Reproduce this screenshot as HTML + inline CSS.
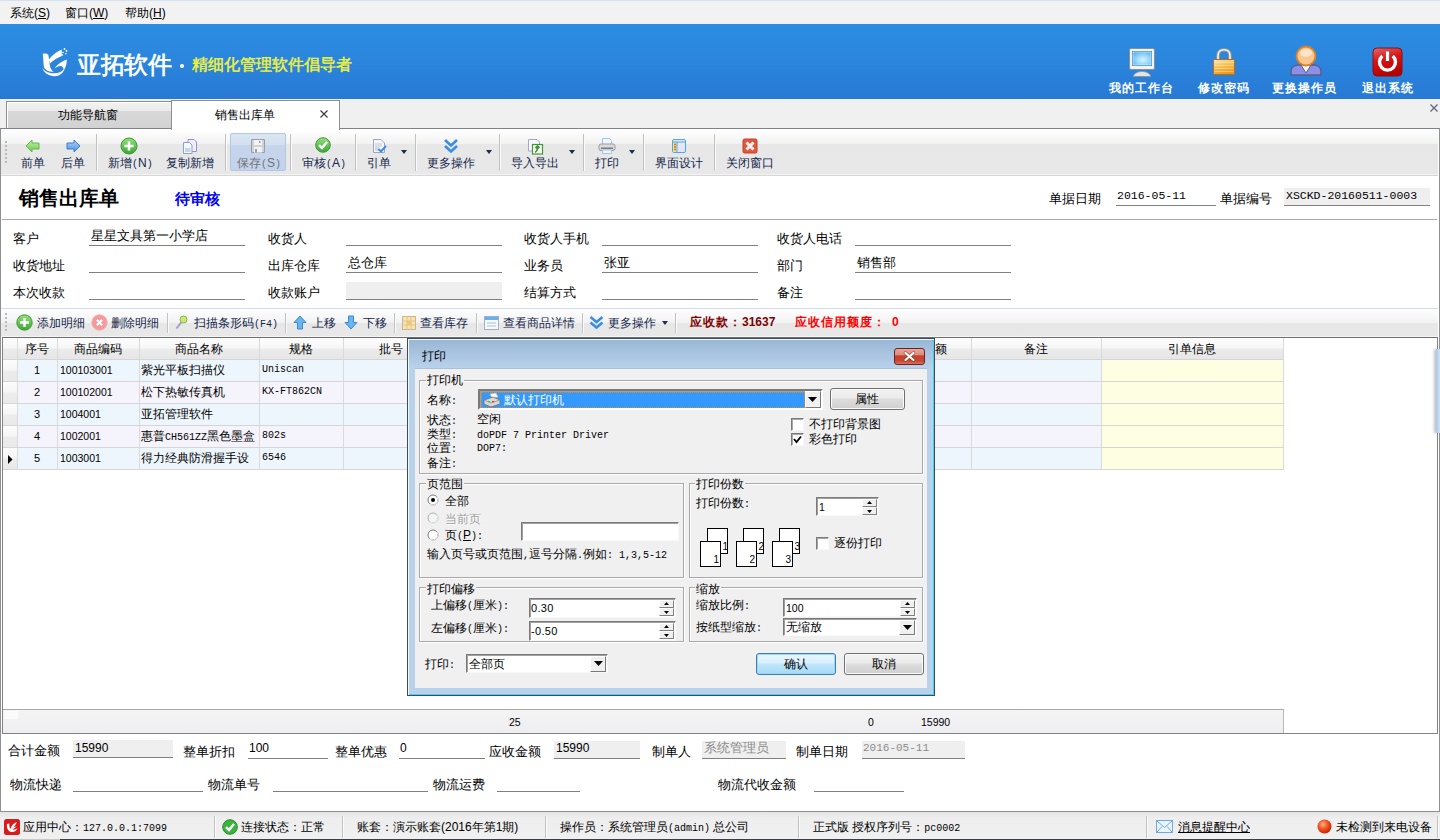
<!DOCTYPE html>
<html><head><meta charset="utf-8">
<style>
*{box-sizing:border-box}
body{margin:0;width:1440px;height:840px;position:relative;overflow:hidden;background:#f0f0f0;font-family:"Liberation Sans",sans-serif;font-size:12px;color:#000}
.a{position:absolute}
.t{position:absolute;white-space:nowrap;line-height:12px;font-size:12px}
.f13{font-size:13px;line-height:13px}
.hw{font-family:"Liberation Mono",monospace;font-size:10px;display:inline-block;width:6px;text-align:center}
.m{font-family:"Liberation Mono",monospace}
.nv{color:#13254a}
.sep{position:absolute;width:2px;background:#c2c2c2;border-right:1px solid #fafafa}
.ul{position:absolute;height:1px;background:#808080}
.gb{position:absolute;border:1px solid #a9a9a9;box-shadow:1px 1px 0 #fff inset,1px 1px 0 #fff}
.gl{position:absolute;background:#f0f0f0;line-height:12px;white-space:nowrap;padding:0 1px}
.sunk{position:absolute;background:#fff;border:1px solid;border-color:#828282 #fff #fff #828282;box-shadow:inset 1px 1px 0 #404040,0 0 0 0 #fff}
</style></head><body>

<svg width="0" height="0" style="position:absolute"><defs><linearGradient id="gg" x1="0" y1="0" x2="0" y2="1"><stop offset="0" stop-color="#c6f0a6"/><stop offset="1" stop-color="#6cc84e"/></linearGradient><linearGradient id="bg" x1="0" y1="0" x2="0" y2="1"><stop offset="0" stop-color="#b0d6fa"/><stop offset="1" stop-color="#4a8ee0"/></linearGradient><linearGradient id="pg" x1="0" y1="0" x2="0" y2="1"><stop offset="0" stop-color="#96e07c"/><stop offset="1" stop-color="#3aa636"/></linearGradient></defs></svg>
<!-- MENU BAR -->
<div class="a" style="left:0;top:0;width:1440px;height:24px;background:#f2f2f2;border-top:1px solid #d3e1f3"></div>
<div class="t" style="left:10px;top:7px">系统(<u>S</u>)</div>
<div class="t" style="left:65px;top:7px">窗口(<u>W</u>)</div>
<div class="t" style="left:125px;top:7px">帮助(<u>H</u>)</div>

<!-- HEADER -->
<div class="a" style="left:0;top:24px;width:1440px;height:75px;background:linear-gradient(180deg,#2b8ee2 0%,#2b85dd 50%,#2779d4 100%)"></div>
<svg class="a" style="left:38px;top:44px" width="34" height="36" viewBox="0 0 34 36">
 <path d="M4.7 10 C6.5 9.3 9 9.5 10.3 10.8 C11 14 11.3 18 11.8 21 C12.3 24 13.5 26.5 15.5 27.8 C11 28 7.5 26.5 6 23.5 C5.2 19 5.5 14 4.7 10 Z" fill="#fff"/>
 <path d="M10.8 15.5 C14.5 11 19 7.5 23.8 5.6 L23.8 12 C19.5 13.5 15 16.5 12 19.5 Z" fill="#fff"/>
 <path d="M16.3 24.5 C19.5 20 24 17 28.8 15.5 C28.8 19.5 28 23 25.8 26 C25.3 23 24 21.8 22 22 C20 22.3 18 23.3 16.3 24.5 Z" fill="#fff"/>
 <path d="M4.3 24 C7 27.8 11 29.3 16 29.3 C21 29.3 24.5 27.5 26.8 24 C25.5 29.5 21.5 32.2 16.5 32.2 C10.5 32.2 6 28.8 4.3 24 Z" fill="#fff"/>
 <circle cx="26.5" cy="5" r=".9" fill="#fff"/><circle cx="28.5" cy="7" r=".9" fill="#fff"/><circle cx="25" cy="8.5" r=".8" fill="#fff"/><circle cx="27.8" cy="9.8" r=".8" fill="#fff"/><circle cx="24.5" cy="11" r=".7" fill="#fff"/>
</svg>
<div class="a" style="left:77px;top:51px;font-size:24px;line-height:28px;color:#fff;white-space:nowrap;letter-spacing:-0.5px;-webkit-text-stroke:0.7px #fff">亚拓软件</div>
<div class="a" style="left:180px;top:64px;width:4px;height:4px;border-radius:2px;background:#fff"></div>
<div class="a" style="left:192px;top:55px;font-size:16px;line-height:20px;color:#f0f23a;white-space:nowrap;-webkit-text-stroke:0.45px #f0f23a">精细化管理软件倡导者</div>

<!-- monitor -->
<svg class="a" style="left:1128px;top:47px" width="28" height="30" viewBox="0 0 28 30">
 <defs><radialGradient id="scr" cx=".55" cy=".6" r=".7"><stop offset="0" stop-color="#d8f4fe"/><stop offset=".6" stop-color="#8cd2f8"/><stop offset="1" stop-color="#5ab0ea"/></radialGradient></defs>
 <path d="M5 29.5 C6 26.5 9.5 24.5 14 24.5 C18.5 24.5 22 26.5 23 29.5 Z" fill="#e2e4e6" stroke="#8a9096" stroke-width=".8"/>
 <rect x="1.5" y="1.5" width="25" height="21" rx="1.5" fill="#f0f2f3" stroke="#8a9096"/>
 <rect x="4" y="4" width="20" height="15" fill="#3a86c8"/>
 <rect x="5" y="5" width="18" height="13" fill="url(#scr)" stroke="#e8f8ff" stroke-width=".6"/>
</svg>
<!-- lock -->
<svg class="a" style="left:1212px;top:48px" width="24" height="30" viewBox="0 0 24 30">
 <defs><linearGradient id="lk" x1="0" y1="0" x2=".4" y2="1"><stop offset="0" stop-color="#fde6b0"/><stop offset=".5" stop-color="#f8c050"/><stop offset="1" stop-color="#f09a18"/></linearGradient></defs>
 <path d="M6 12 V8 C6 3.8 8.5 1.8 12 1.8 C15.5 1.8 18 3.8 18 8 V12" fill="none" stroke="#8e9398" stroke-width="3.6"/>
 <path d="M6 12 V8 C6 3.8 8.5 1.8 12 1.8 C15.5 1.8 18 3.8 18 8 V12" fill="none" stroke="#f2f3f4" stroke-width="1.6"/>
 <rect x="1.5" y="11.5" width="21" height="15" rx="1" fill="url(#lk)" stroke="#c0681c"/>
 <path d="M2.5 14.5h19M2.5 17.5h19M2.5 20.5h19M2.5 23.5h19" stroke="#fff" stroke-width=".7" opacity=".5"/>
</svg>
<!-- user -->
<svg class="a" style="left:1289px;top:45px" width="34" height="32" viewBox="0 0 34 32">
 <path d="M2 30 V26 C2 22 6 20 10 20 H24 C28 20 32 22 32 26 V30 Z" fill="#8d8ee6" stroke="#5a5c8c" stroke-width="1.5"/>
 <path d="M12 20 L17 28 L22 20 Z" fill="#fff" stroke="#5a5c8c" stroke-width="1"/>
 <circle cx="17" cy="11" r="9.5" fill="#fbc58e" stroke="#d9822b" stroke-width="1.8"/>
 <ellipse cx="17" cy="8" rx="6" ry="4" fill="#fde3c8"/>
</svg>
<!-- power -->
<svg class="a" style="left:1372px;top:47px" width="31" height="30" viewBox="0 0 31 30">
 <defs><linearGradient id="pw" x1="0" y1="0" x2="0.3" y2="1"><stop offset="0" stop-color="#e06a6a"/><stop offset=".45" stop-color="#d81818"/><stop offset="1" stop-color="#b80000"/></linearGradient></defs>
 <rect x="1" y="1" width="29" height="28" rx="4" fill="url(#pw)" stroke="#8a1010"/>
 <path d="M10.3 9 A8 8 0 1 0 20.7 9" fill="none" stroke="#fff" stroke-width="3.4"/>
 <path d="M15.5 4.5 V14" stroke="#fff" stroke-width="3.2"/>
</svg>
<div class="t" style="left:1109px;top:82px;color:#fff;font-weight:bold;letter-spacing:1px">我的工作台</div>
<div class="t" style="left:1198px;top:82px;color:#fff;font-weight:bold;letter-spacing:1px">修改密码</div>
<div class="t" style="left:1272px;top:82px;color:#fff;font-weight:bold;letter-spacing:1px">更换操作员</div>
<div class="t" style="left:1362px;top:82px;color:#fff;font-weight:bold;letter-spacing:1px">退出系统</div>

<!-- TAB STRIP -->
<div class="a" style="left:0;top:99px;width:1440px;height:30px;background:#f0f0f0"></div>

<div class="a" style="left:6px;top:101px;width:166px;height:28px;border:1px solid #8a8e95;border-bottom:none;background:linear-gradient(180deg,#f2f2f2 0px,#ebebeb 9px,#d8d8d8 9px,#d2d2d2 100%);box-shadow:inset 1px 1px 0 #fff"></div>
<div class="t" style="left:58px;top:109px">功能导航窗</div>
<div class="a" style="left:171px;top:100px;width:169px;height:30px;border:1px solid #8a8e95;border-bottom:none;background:#fff;z-index:2"></div>
<div class="t" style="left:215px;top:109px;z-index:3">销售出库单</div>
<svg class="a" style="left:319px;top:109px;z-index:3" width="10" height="10" viewBox="0 0 10 10"><path d="M1.5 1.5L8.5 8.5M8.5 1.5L1.5 8.5" stroke="#3a3a3a" stroke-width="1.1"/></svg>
<svg class="a" style="left:1429px;top:103px" width="10" height="10" viewBox="0 0 10 10"><path d="M1.5 1.5L8.5 8.5M8.5 1.5L1.5 8.5" stroke="#5d6878" stroke-width="1.3"/></svg>

<!-- PANEL -->
<div class="a" style="left:0;top:128px;width:1440px;height:684px;background:#fff;border:1px solid #8d9196;border-top-color:#7e838b"></div>

<!-- TOOLBAR -->
<div class="a" style="left:1px;top:129px;width:1437px;height:47px;background:linear-gradient(180deg,#fff 0px,#fdfdfd 3px,#f2f2f2 15px,#e7e7e7 15px,#e8e8e8 45px,#f3f3f3 45px,#f3f3f3 46px);border-bottom:1px solid #d6d6d6"></div>
<div class="a" style="left:5px;top:141px;width:2px;height:24px;background:repeating-linear-gradient(180deg,#b8b8b8 0 2px,transparent 2px 4px)"></div>
<div class="sep" style="left:96px;top:134px;height:37px"></div>
<div class="sep" style="left:225px;top:134px;height:37px"></div>
<div class="a" style="left:230px;top:133px;width:56px;height:38px;border:1px solid #b3c6e2;border-radius:2px;background:linear-gradient(180deg,#dce6f3 0%,#d3dff0 30%,#c6d5ec 32%,#c3d3eb 100%)"></div>
<div class="sep" style="left:290px;top:134px;height:37px"></div>
<div class="sep" style="left:355px;top:134px;height:37px"></div>
<div class="sep" style="left:415px;top:134px;height:37px"></div>
<div class="sep" style="left:499px;top:134px;height:37px"></div>
<div class="sep" style="left:583px;top:134px;height:37px"></div>
<div class="sep" style="left:643px;top:134px;height:37px"></div>
<div class="sep" style="left:714px;top:134px;height:37px"></div>

<div class="t nv" style="left:21px;top:157px">前单</div>
<div class="t nv" style="left:61px;top:157px">后单</div>
<div class="t nv" style="left:108px;top:157px">新增<span class="hw">(</span>N<span class="hw">)</span></div>
<div class="t nv" style="left:166px;top:157px">复制新增</div>
<div class="t" style="left:237px;top:157px;color:#727272">保存<span class="hw">(</span>S<span class="hw">)</span></div>
<div class="t nv" style="left:302px;top:157px">审核<span class="hw">(</span>A<span class="hw">)</span></div>
<div class="t nv" style="left:367px;top:157px">引单</div>
<div class="t nv" style="left:427px;top:157px">更多操作</div>
<div class="t nv" style="left:511px;top:157px">导入导出</div>
<div class="t nv" style="left:595px;top:157px">打印</div>
<div class="t nv" style="left:655px;top:157px">界面设计</div>
<div class="t nv" style="left:726px;top:157px">关闭窗口</div>
<!-- dropdown arrows -->
<svg class="a" style="left:401px;top:150px" width="7" height="4"><path d="M0 0H6L3 4Z" fill="#1c2d4c"/></svg>
<svg class="a" style="left:486px;top:150px" width="7" height="4"><path d="M0 0H6L3 4Z" fill="#1c2d4c"/></svg>
<svg class="a" style="left:569px;top:150px" width="7" height="4"><path d="M0 0H6L3 4Z" fill="#1c2d4c"/></svg>
<svg class="a" style="left:629px;top:150px" width="7" height="4"><path d="M0 0H6L3 4Z" fill="#1c2d4c"/></svg>
<!-- icons -->
<svg class="a" style="left:25px;top:139px" width="15" height="14" viewBox="0 0 15 14"><path d="M1 7L7 1V4H14V10H7V13Z" fill="url(#gg)" stroke="#5cb84a" stroke-linejoin="round"/></svg>
<svg class="a" style="left:66px;top:139px" width="15" height="14" viewBox="0 0 15 14"><path d="M14 7L8 1V4H1V10H8V13Z" fill="url(#bg)" stroke="#3d7fd0" stroke-linejoin="round"/></svg>
<svg class="a" style="left:120px;top:137px" width="18" height="18" viewBox="0 0 18 18"><circle cx="9" cy="9" r="8" fill="url(#pg)" stroke="#3d9a32"/><path d="M9 4.5V13.5M4.5 9H13.5" stroke="#fff" stroke-width="2.6"/></svg>
<svg class="a" style="left:182px;top:138px" width="16" height="16" viewBox="0 0 16 16"><path d="M6 1.5H12L14.5 4V13.5H6Z" fill="#f1eefa" stroke="#a08bd0"/><path d="M1.5 4.5H7.5L10 7V15.5H1.5Z" fill="#f4f7fc" stroke="#8ba0c8"/><rect x="3" y="10" width="5.5" height="4" fill="#c6d3ea"/></svg>
<svg class="a" style="left:250px;top:138px" width="16" height="16" viewBox="0 0 16 16"><path d="M1.5 1.5H14.5V14.5H1.5Z" fill="#cfd3d8" stroke="#9a9ea4"/><rect x="4" y="2" width="8" height="5" fill="#f2f3f5"/><rect x="9" y="3" width="1.5" height="2" fill="#9a9ea4"/><rect x="4" y="9" width="8" height="5.5" fill="#f2f3f5"/><rect x="5" y="11" width="2" height="3.5" fill="#9a9ea4"/></svg>
<svg class="a" style="left:315px;top:137px" width="16" height="16" viewBox="0 0 16 16"><circle cx="8" cy="8" r="7.3" fill="url(#pg)" stroke="#3d9a32"/><path d="M4 8.2L7 11L12 5" fill="none" stroke="#fff" stroke-width="2.4"/></svg>
<svg class="a" style="left:372px;top:138px" width="15" height="16" viewBox="0 0 15 16"><path d="M1.5 1.5H9L12.5 5V14.5H1.5Z" fill="#f4f6fa" stroke="#9aa6c0"/><path d="M3 6H10M3 8H10" stroke="#b8c4dc"/><rect x="3" y="9" width="4" height="4" fill="#d0d8e8"/><path d="M6.5 11L9 13.5L14 8" fill="none" stroke="#3c8ee0" stroke-width="2"/></svg>
<svg class="a" style="left:443px;top:138px" width="16" height="16" viewBox="0 0 16 16"><path d="M2 2L8 7.5L14 2" fill="none" stroke="#3b8de3" stroke-width="2.6"/><path d="M2 8L8 13.5L14 8" fill="none" stroke="#3b8de3" stroke-width="2.6"/></svg>
<svg class="a" style="left:527px;top:138px" width="17" height="17" viewBox="0 0 17 17"><path d="M1.5 1.5H10L12.5 4V13H1.5Z" fill="#f6f8fc" stroke="#a8a4d8"/><rect x="5.5" y="6.5" width="10" height="9.5" fill="#fff" stroke="#3d9a32" stroke-width="1.2"/><path d="M8 14C9 14 11 12 10.5 9M8.5 10L10.5 8L12.5 10" fill="none" stroke="#3d9a32" stroke-width="1.8"/></svg>
<svg class="a" style="left:598px;top:137px" width="18" height="18" viewBox="0 0 18 18"><path d="M4.5 1.5H11.5L13.5 3.5V8H4.5Z" fill="#f2f8fe" stroke="#9cc6ee"/><rect x="1" y="7" width="16" height="6.5" rx="2" fill="#dadada" stroke="#9c9c9c"/><rect x="3" y="10.5" width="12" height="1.5" fill="#7a7a7a"/><path d="M4.5 13H13.5V16.5H4.5Z" fill="#eef6fe" stroke="#9cc6ee"/></svg>
<svg class="a" style="left:671px;top:138px" width="16" height="16" viewBox="0 0 16 16"><rect x="1.5" y="1.5" width="13" height="13" rx="1.5" fill="#e8e4f8" stroke="#4aa8f0"/><rect x="2" y="4" width="4" height="10" fill="#f8e07a"/><path d="M2 4H14" stroke="#4aa8f0"/><path d="M6 4V14" stroke="#4aa8f0"/><circle cx="4" cy="6.5" r=".9" fill="#e05a2a"/><circle cx="4" cy="9" r=".9" fill="#e05a2a"/><circle cx="4" cy="11.5" r=".9" fill="#e05a2a"/></svg>
<svg class="a" style="left:742px;top:138px" width="16" height="16" viewBox="0 0 16 16"><rect x="1" y="1" width="14" height="14" rx="1.5" fill="#e0563a" stroke="#c44030"/><path d="M4.5 4.5L11.5 11.5M11.5 4.5L4.5 11.5" stroke="#eef2f4" stroke-width="3"/></svg>

<!-- TITLE -->
<div class="a" style="left:19px;top:188px;font-size:20px;line-height:20px;font-weight:bold;white-space:nowrap">销售出库单</div>
<div class="a" style="left:175px;top:192px;font-size:14.6px;line-height:15px;font-weight:bold;color:#0000f0;white-space:nowrap">待审核</div>
<div class="t f13" style="left:1049px;top:192px">单据日期</div>
<div class="t m" style="left:1117px;top:190px;font-size:11.5px">2016-05-11</div>
<div class="ul" style="left:1116px;top:205px;width:100px"></div>
<div class="t f13" style="left:1220px;top:192px">单据编号</div>
<div class="a" style="left:1284px;top:188px;width:146px;height:17px;background:#efefef"></div>
<div class="t m" style="left:1286px;top:190px;font-size:11.5px">XSCKD-20160511-0003</div>
<div class="ul" style="left:1284px;top:205px;width:146px"></div>
<div class="a" style="left:2px;top:219px;width:1435px;height:1px;background:#a8a8a8"></div>

<!-- FORM -->
<div class="t f13" style="left:13px;top:232px">客户</div>
<div class="t f13" style="left:91px;top:229px">星星文具第一小学店</div>
<div class="ul" style="left:89px;top:245px;width:156px"></div>
<div class="t f13" style="left:268px;top:232px">收货人</div>
<div class="ul" style="left:346px;top:245px;width:156px"></div>
<div class="t f13" style="left:524px;top:232px">收货人手机</div>
<div class="ul" style="left:602px;top:245px;width:156px"></div>
<div class="t f13" style="left:777px;top:232px">收货人电话</div>
<div class="ul" style="left:855px;top:245px;width:156px"></div>

<div class="t f13" style="left:13px;top:259px">收货地址</div>
<div class="ul" style="left:89px;top:272px;width:156px"></div>
<div class="t f13" style="left:268px;top:259px">出库仓库</div>
<div class="t f13" style="left:348px;top:256px">总仓库</div>
<div class="ul" style="left:346px;top:272px;width:156px"></div>
<div class="t f13" style="left:524px;top:259px">业务员</div>
<div class="t f13" style="left:604px;top:256px">张亚</div>
<div class="ul" style="left:602px;top:272px;width:156px"></div>
<div class="t f13" style="left:777px;top:259px">部门</div>
<div class="t f13" style="left:857px;top:256px">销售部</div>
<div class="ul" style="left:855px;top:272px;width:156px"></div>

<div class="t f13" style="left:13px;top:286px">本次收款</div>
<div class="ul" style="left:89px;top:299px;width:156px"></div>
<div class="t f13" style="left:268px;top:286px">收款账户</div>
<div class="a" style="left:346px;top:282px;width:156px;height:17px;background:#efefef"></div>
<div class="ul" style="left:346px;top:299px;width:156px"></div>
<div class="t f13" style="left:524px;top:286px">结算方式</div>
<div class="ul" style="left:602px;top:299px;width:156px"></div>
<div class="t f13" style="left:777px;top:286px">备注</div>
<div class="ul" style="left:855px;top:299px;width:156px"></div>

<!-- DETAIL TOOLBAR -->
<div class="a" style="left:1px;top:308px;width:1437px;height:29px;border-top:1px solid #d3dce5;background:linear-gradient(180deg,#fefefe 0px,#f2f2f2 14px,#e7e7e7 14px,#e8e8e8 27px,#f5f5f5 27px)"></div>
<div class="a" style="left:5px;top:313px;width:2px;height:20px;background:repeating-linear-gradient(180deg,#b8b8b8 0 2px,transparent 2px 4px)"></div>
<svg class="a" style="left:16px;top:314px" width="17" height="17" viewBox="0 0 17 17"><circle cx="8.5" cy="8.5" r="7.7" fill="url(#pg)" stroke="#3d9a32"/><path d="M8.5 4V13M4 8.5H13" stroke="#fff" stroke-width="2.4"/></svg>
<div class="t nv" style="left:37px;top:317px">添加明细</div>
<svg class="a" style="left:91px;top:314px" width="17" height="17" viewBox="0 0 17 17"><circle cx="8.5" cy="8.5" r="7.7" fill="#f49a9a" stroke="#f0b0b0"/><path d="M5.8 5.8L11.2 11.2M11.2 5.8L5.8 11.2" stroke="#fff" stroke-width="2.2"/></svg>
<div class="t nv" style="left:111px;top:317px">删除明细</div>
<div class="sep" style="left:167px;top:313px;height:20px"></div>
<svg class="a" style="left:175px;top:315px" width="13" height="15" viewBox="0 0 13 15"><circle cx="8.5" cy="4.5" r="3.5" fill="#c8e87a" stroke="#8ab840"/><path d="M6.5 7L1.5 13.5" stroke="#9aa0c8" stroke-width="2"/></svg>
<div class="t nv" style="left:194px;top:317px">扫描条形码<span class="hw">(</span><span class="m" style="font-size:10px">F4</span><span class="hw">)</span></div>
<div class="sep" style="left:285px;top:313px;height:20px"></div>
<svg class="a" style="left:293px;top:315px" width="14" height="15" viewBox="0 0 14 15"><path d="M7 1L13 7.5H9.5V14H4.5V7.5H1Z" fill="#6ab4f0" stroke="#3d8ad8" stroke-linejoin="round"/></svg>
<div class="t nv" style="left:312px;top:317px">上移</div>
<svg class="a" style="left:344px;top:315px" width="14" height="15" viewBox="0 0 14 15"><path d="M7 14L13 7.5H9.5V1H4.5V7.5H1Z" fill="#6ab4f0" stroke="#3d8ad8" stroke-linejoin="round"/></svg>
<div class="t nv" style="left:363px;top:317px">下移</div>
<div class="sep" style="left:394px;top:313px;height:20px"></div>
<svg class="a" style="left:401px;top:315px" width="16" height="16" viewBox="0 0 16 16"><rect x="1.5" y="1.5" width="13" height="13" fill="#fbe4a8" stroke="#c8b890"/><path d="M6 1.5V14.5M10 1.5V14.5M1.5 6H14.5M1.5 10H14.5" stroke="#d8c8a0"/><rect x="6" y="6" width="4" height="4" fill="#f8c070"/></svg>
<div class="t nv" style="left:420px;top:317px">查看库存</div>
<div class="sep" style="left:476px;top:313px;height:20px"></div>
<svg class="a" style="left:483px;top:315px" width="17" height="16" viewBox="0 0 17 16"><rect x="1.5" y="1.5" width="14" height="13" fill="#f6f8fb" stroke="#9ab0cc"/><rect x="2" y="2" width="13" height="3" fill="#6ab0ec"/><path d="M4 8H13M4 11H13" stroke="#b0c0d8"/></svg>
<div class="t nv" style="left:503px;top:317px">查看商品详情</div>
<div class="sep" style="left:582px;top:313px;height:20px"></div>
<svg class="a" style="left:589px;top:315px" width="15" height="15" viewBox="0 0 15 15"><path d="M1.5 2L7.5 7L13.5 2" fill="none" stroke="#3b8de3" stroke-width="2.5"/><path d="M1.5 7.5L7.5 12.5L13.5 7.5" fill="none" stroke="#3b8de3" stroke-width="2.5"/></svg>
<div class="t nv" style="left:608px;top:317px">更多操作</div>
<svg class="a" style="left:662px;top:321px" width="7" height="4"><path d="M0 0H6L3 4Z" fill="#1c2d4c"/></svg>
<div class="sep" style="left:675px;top:313px;height:20px"></div>
<div class="t" style="left:690px;top:316px;font-weight:bold;color:#800000;letter-spacing:1px">应收款：<span style="letter-spacing:0">31637</span></div>
<div class="t" style="left:795px;top:316px;font-weight:bold;color:#ff0000;letter-spacing:1px">应收信用额度：<span style="letter-spacing:0;margin-left:6px">0</span></div>

<!-- GRID -->
<div class="a" style="left:2px;top:337px;width:1436px;height:397px;border:1px solid #828282;border-top-color:#6f6f6f;background:#fff"></div>
<div id="grid"><div class="a" style="left:3px;top:338px;width:15px;height:22px;background:linear-gradient(180deg,#fdfdfd 0%,#f7f7f7 45%,#ebebeb 55%,#e6e6e7 100%);border-right:1px solid #dadada;border-bottom:1px solid #d5d5d5"></div>
<div class="a" style="left:18px;top:338px;width:40px;height:22px;background:linear-gradient(180deg,#fdfdfd 0%,#f7f7f7 45%,#ebebeb 55%,#e6e6e7 100%);border-right:1px solid #dadada;border-bottom:1px solid #d5d5d5"></div>
<div class="t" style="left:17px;width:40px;text-align:center;top:343px">序号</div>
<div class="a" style="left:58px;top:338px;width:82px;height:22px;background:linear-gradient(180deg,#fdfdfd 0%,#f7f7f7 45%,#ebebeb 55%,#e6e6e7 100%);border-right:1px solid #dadada;border-bottom:1px solid #d5d5d5"></div>
<div class="t" style="left:57px;width:82px;text-align:center;top:343px">商品编码</div>
<div class="a" style="left:140px;top:338px;width:120px;height:22px;background:linear-gradient(180deg,#fdfdfd 0%,#f7f7f7 45%,#ebebeb 55%,#e6e6e7 100%);border-right:1px solid #dadada;border-bottom:1px solid #d5d5d5"></div>
<div class="t" style="left:139px;width:120px;text-align:center;top:343px">商品名称</div>
<div class="a" style="left:260px;top:338px;width:84px;height:22px;background:linear-gradient(180deg,#fdfdfd 0%,#f7f7f7 45%,#ebebeb 55%,#e6e6e7 100%);border-right:1px solid #dadada;border-bottom:1px solid #d5d5d5"></div>
<div class="t" style="left:259px;width:84px;text-align:center;top:343px">规格</div>
<div class="a" style="left:344px;top:338px;width:95px;height:22px;background:linear-gradient(180deg,#fdfdfd 0%,#f7f7f7 45%,#ebebeb 55%,#e6e6e7 100%);border-right:1px solid #dadada;border-bottom:1px solid #d5d5d5"></div>
<div class="t" style="left:343px;width:95px;text-align:center;top:343px">批号</div>
<div class="a" style="left:439px;top:338px;width:147px;height:22px;background:linear-gradient(180deg,#fdfdfd 0%,#f7f7f7 45%,#ebebeb 55%,#e6e6e7 100%);border-right:1px solid #dadada;border-bottom:1px solid #d5d5d5"></div>
<div class="a" style="left:586px;top:338px;width:115px;height:22px;background:linear-gradient(180deg,#fdfdfd 0%,#f7f7f7 45%,#ebebeb 55%,#e6e6e7 100%);border-right:1px solid #dadada;border-bottom:1px solid #d5d5d5"></div>
<div class="a" style="left:701px;top:338px;width:120px;height:22px;background:linear-gradient(180deg,#fdfdfd 0%,#f7f7f7 45%,#ebebeb 55%,#e6e6e7 100%);border-right:1px solid #dadada;border-bottom:1px solid #d5d5d5"></div>
<div class="a" style="left:821px;top:338px;width:79px;height:22px;background:linear-gradient(180deg,#fdfdfd 0%,#f7f7f7 45%,#ebebeb 55%,#e6e6e7 100%);border-right:1px solid #dadada;border-bottom:1px solid #d5d5d5"></div>
<div class="a" style="left:900px;top:338px;width:72px;height:22px;background:linear-gradient(180deg,#fdfdfd 0%,#f7f7f7 45%,#ebebeb 55%,#e6e6e7 100%);border-right:1px solid #dadada;border-bottom:1px solid #d5d5d5"></div>
<div class="t" style="left:899px;width:72px;text-align:center;top:343px">金额</div>
<div class="a" style="left:972px;top:338px;width:130px;height:22px;background:linear-gradient(180deg,#fdfdfd 0%,#f7f7f7 45%,#ebebeb 55%,#e6e6e7 100%);border-right:1px solid #dadada;border-bottom:1px solid #d5d5d5"></div>
<div class="t" style="left:971px;width:130px;text-align:center;top:343px">备注</div>
<div class="a" style="left:1102px;top:338px;width:182px;height:22px;background:linear-gradient(180deg,#fdfdfd 0%,#f7f7f7 45%,#ebebeb 55%,#e6e6e7 100%);border-right:1px solid #dadada;border-bottom:1px solid #d5d5d5"></div>
<div class="t" style="left:1101px;width:182px;text-align:center;top:343px">引单信息</div>
<div class="a" style="left:3px;top:360px;width:15px;height:22px;background:linear-gradient(180deg,#fcfcfc 0%,#f6f6f6 45%,#ececec 55%,#e9e9e9 100%);border-right:1px solid #dadada;border-bottom:1px solid #d6d6d6"></div>
<div class="a" style="left:18px;top:360px;width:40px;height:22px;background:#eef6fd;border-right:1px solid #dadada;border-bottom:1px solid #d6d6d6"></div>
<div class="a" style="left:58px;top:360px;width:82px;height:22px;background:#eef6fd;border-right:1px solid #dadada;border-bottom:1px solid #d6d6d6"></div>
<div class="a" style="left:140px;top:360px;width:120px;height:22px;background:#eef6fd;border-right:1px solid #dadada;border-bottom:1px solid #d6d6d6"></div>
<div class="a" style="left:260px;top:360px;width:84px;height:22px;background:#eef6fd;border-right:1px solid #dadada;border-bottom:1px solid #d6d6d6"></div>
<div class="a" style="left:344px;top:360px;width:95px;height:22px;background:#eef6fd;border-right:1px solid #dadada;border-bottom:1px solid #d6d6d6"></div>
<div class="a" style="left:439px;top:360px;width:147px;height:22px;background:#eef6fd;border-right:1px solid #dadada;border-bottom:1px solid #d6d6d6"></div>
<div class="a" style="left:586px;top:360px;width:115px;height:22px;background:#eef6fd;border-right:1px solid #dadada;border-bottom:1px solid #d6d6d6"></div>
<div class="a" style="left:701px;top:360px;width:120px;height:22px;background:#eef6fd;border-right:1px solid #dadada;border-bottom:1px solid #d6d6d6"></div>
<div class="a" style="left:821px;top:360px;width:79px;height:22px;background:#eef6fd;border-right:1px solid #dadada;border-bottom:1px solid #d6d6d6"></div>
<div class="a" style="left:900px;top:360px;width:72px;height:22px;background:#eef6fd;border-right:1px solid #dadada;border-bottom:1px solid #d6d6d6"></div>
<div class="a" style="left:972px;top:360px;width:130px;height:22px;background:#eef6fd;border-right:1px solid #dadada;border-bottom:1px solid #d6d6d6"></div>
<div class="a" style="left:1102px;top:360px;width:182px;height:22px;background:#fefee2;border-right:1px solid #dadada;border-bottom:1px solid #d6d6d6"></div>
<div class="t" style="left:17px;width:40px;text-align:center;top:364px;font-size:11px">1</div>
<div class="t" style="left:60px;top:364px;font-size:10.5px">100103001</div>
<div class="t" style="left:141px;top:364px">紫光平板扫描仪</div>
<div class="t m" style="left:262px;top:364px;font-size:10px">Uniscan</div>
<div class="a" style="left:3px;top:382px;width:15px;height:22px;background:linear-gradient(180deg,#fcfcfc 0%,#f6f6f6 45%,#ececec 55%,#e9e9e9 100%);border-right:1px solid #dadada;border-bottom:1px solid #d6d6d6"></div>
<div class="a" style="left:18px;top:382px;width:40px;height:22px;background:#f5f3fb;border-right:1px solid #dadada;border-bottom:1px solid #d6d6d6"></div>
<div class="a" style="left:58px;top:382px;width:82px;height:22px;background:#f5f3fb;border-right:1px solid #dadada;border-bottom:1px solid #d6d6d6"></div>
<div class="a" style="left:140px;top:382px;width:120px;height:22px;background:#f5f3fb;border-right:1px solid #dadada;border-bottom:1px solid #d6d6d6"></div>
<div class="a" style="left:260px;top:382px;width:84px;height:22px;background:#f5f3fb;border-right:1px solid #dadada;border-bottom:1px solid #d6d6d6"></div>
<div class="a" style="left:344px;top:382px;width:95px;height:22px;background:#f5f3fb;border-right:1px solid #dadada;border-bottom:1px solid #d6d6d6"></div>
<div class="a" style="left:439px;top:382px;width:147px;height:22px;background:#f5f3fb;border-right:1px solid #dadada;border-bottom:1px solid #d6d6d6"></div>
<div class="a" style="left:586px;top:382px;width:115px;height:22px;background:#f5f3fb;border-right:1px solid #dadada;border-bottom:1px solid #d6d6d6"></div>
<div class="a" style="left:701px;top:382px;width:120px;height:22px;background:#f5f3fb;border-right:1px solid #dadada;border-bottom:1px solid #d6d6d6"></div>
<div class="a" style="left:821px;top:382px;width:79px;height:22px;background:#f5f3fb;border-right:1px solid #dadada;border-bottom:1px solid #d6d6d6"></div>
<div class="a" style="left:900px;top:382px;width:72px;height:22px;background:#f5f3fb;border-right:1px solid #dadada;border-bottom:1px solid #d6d6d6"></div>
<div class="a" style="left:972px;top:382px;width:130px;height:22px;background:#f5f3fb;border-right:1px solid #dadada;border-bottom:1px solid #d6d6d6"></div>
<div class="a" style="left:1102px;top:382px;width:182px;height:22px;background:#fefee2;border-right:1px solid #dadada;border-bottom:1px solid #d6d6d6"></div>
<div class="t" style="left:17px;width:40px;text-align:center;top:386px;font-size:11px">2</div>
<div class="t" style="left:60px;top:386px;font-size:10.5px">100102001</div>
<div class="t" style="left:141px;top:386px">松下热敏传真机</div>
<div class="t m" style="left:262px;top:386px;font-size:10px">KX-FT862CN</div>
<div class="a" style="left:3px;top:404px;width:15px;height:22px;background:linear-gradient(180deg,#fcfcfc 0%,#f6f6f6 45%,#ececec 55%,#e9e9e9 100%);border-right:1px solid #dadada;border-bottom:1px solid #d6d6d6"></div>
<div class="a" style="left:18px;top:404px;width:40px;height:22px;background:#eef6fd;border-right:1px solid #dadada;border-bottom:1px solid #d6d6d6"></div>
<div class="a" style="left:58px;top:404px;width:82px;height:22px;background:#eef6fd;border-right:1px solid #dadada;border-bottom:1px solid #d6d6d6"></div>
<div class="a" style="left:140px;top:404px;width:120px;height:22px;background:#eef6fd;border-right:1px solid #dadada;border-bottom:1px solid #d6d6d6"></div>
<div class="a" style="left:260px;top:404px;width:84px;height:22px;background:#eef6fd;border-right:1px solid #dadada;border-bottom:1px solid #d6d6d6"></div>
<div class="a" style="left:344px;top:404px;width:95px;height:22px;background:#eef6fd;border-right:1px solid #dadada;border-bottom:1px solid #d6d6d6"></div>
<div class="a" style="left:439px;top:404px;width:147px;height:22px;background:#eef6fd;border-right:1px solid #dadada;border-bottom:1px solid #d6d6d6"></div>
<div class="a" style="left:586px;top:404px;width:115px;height:22px;background:#eef6fd;border-right:1px solid #dadada;border-bottom:1px solid #d6d6d6"></div>
<div class="a" style="left:701px;top:404px;width:120px;height:22px;background:#eef6fd;border-right:1px solid #dadada;border-bottom:1px solid #d6d6d6"></div>
<div class="a" style="left:821px;top:404px;width:79px;height:22px;background:#eef6fd;border-right:1px solid #dadada;border-bottom:1px solid #d6d6d6"></div>
<div class="a" style="left:900px;top:404px;width:72px;height:22px;background:#eef6fd;border-right:1px solid #dadada;border-bottom:1px solid #d6d6d6"></div>
<div class="a" style="left:972px;top:404px;width:130px;height:22px;background:#eef6fd;border-right:1px solid #dadada;border-bottom:1px solid #d6d6d6"></div>
<div class="a" style="left:1102px;top:404px;width:182px;height:22px;background:#fefee2;border-right:1px solid #dadada;border-bottom:1px solid #d6d6d6"></div>
<div class="t" style="left:17px;width:40px;text-align:center;top:408px;font-size:11px">3</div>
<div class="t" style="left:60px;top:408px;font-size:10.5px">1004001</div>
<div class="t" style="left:141px;top:408px">亚拓管理软件</div>
<div class="a" style="left:3px;top:426px;width:15px;height:22px;background:linear-gradient(180deg,#fcfcfc 0%,#f6f6f6 45%,#ececec 55%,#e9e9e9 100%);border-right:1px solid #dadada;border-bottom:1px solid #d6d6d6"></div>
<div class="a" style="left:18px;top:426px;width:40px;height:22px;background:#f5f3fb;border-right:1px solid #dadada;border-bottom:1px solid #d6d6d6"></div>
<div class="a" style="left:58px;top:426px;width:82px;height:22px;background:#f5f3fb;border-right:1px solid #dadada;border-bottom:1px solid #d6d6d6"></div>
<div class="a" style="left:140px;top:426px;width:120px;height:22px;background:#f5f3fb;border-right:1px solid #dadada;border-bottom:1px solid #d6d6d6"></div>
<div class="a" style="left:260px;top:426px;width:84px;height:22px;background:#f5f3fb;border-right:1px solid #dadada;border-bottom:1px solid #d6d6d6"></div>
<div class="a" style="left:344px;top:426px;width:95px;height:22px;background:#f5f3fb;border-right:1px solid #dadada;border-bottom:1px solid #d6d6d6"></div>
<div class="a" style="left:439px;top:426px;width:147px;height:22px;background:#f5f3fb;border-right:1px solid #dadada;border-bottom:1px solid #d6d6d6"></div>
<div class="a" style="left:586px;top:426px;width:115px;height:22px;background:#f5f3fb;border-right:1px solid #dadada;border-bottom:1px solid #d6d6d6"></div>
<div class="a" style="left:701px;top:426px;width:120px;height:22px;background:#f5f3fb;border-right:1px solid #dadada;border-bottom:1px solid #d6d6d6"></div>
<div class="a" style="left:821px;top:426px;width:79px;height:22px;background:#f5f3fb;border-right:1px solid #dadada;border-bottom:1px solid #d6d6d6"></div>
<div class="a" style="left:900px;top:426px;width:72px;height:22px;background:#f5f3fb;border-right:1px solid #dadada;border-bottom:1px solid #d6d6d6"></div>
<div class="a" style="left:972px;top:426px;width:130px;height:22px;background:#f5f3fb;border-right:1px solid #dadada;border-bottom:1px solid #d6d6d6"></div>
<div class="a" style="left:1102px;top:426px;width:182px;height:22px;background:#fefee2;border-right:1px solid #dadada;border-bottom:1px solid #d6d6d6"></div>
<div class="t" style="left:17px;width:40px;text-align:center;top:430px;font-size:11px">4</div>
<div class="t" style="left:60px;top:430px;font-size:10.5px">1002001</div>
<div class="t" style="left:141px;top:430px">惠普<span class="m" style="font-size:10px">CH561ZZ</span>黑色墨盒</div>
<div class="t m" style="left:262px;top:430px;font-size:10px">802s</div>
<div class="a" style="left:3px;top:448px;width:15px;height:22px;background:linear-gradient(180deg,#fcfcfc 0%,#f6f6f6 45%,#ececec 55%,#e9e9e9 100%);border-right:1px solid #dadada;border-bottom:1px solid #d6d6d6"></div>
<div class="a" style="left:18px;top:448px;width:40px;height:22px;background:#eef6fd;border-right:1px solid #dadada;border-bottom:1px solid #d6d6d6"></div>
<div class="a" style="left:58px;top:448px;width:82px;height:22px;background:#eef6fd;border-right:1px solid #dadada;border-bottom:1px solid #d6d6d6"></div>
<div class="a" style="left:140px;top:448px;width:120px;height:22px;background:#eef6fd;border-right:1px solid #dadada;border-bottom:1px solid #d6d6d6"></div>
<div class="a" style="left:260px;top:448px;width:84px;height:22px;background:#eef6fd;border-right:1px solid #dadada;border-bottom:1px solid #d6d6d6"></div>
<div class="a" style="left:344px;top:448px;width:95px;height:22px;background:#eef6fd;border-right:1px solid #dadada;border-bottom:1px solid #d6d6d6"></div>
<div class="a" style="left:439px;top:448px;width:147px;height:22px;background:#eef6fd;border-right:1px solid #dadada;border-bottom:1px solid #d6d6d6"></div>
<div class="a" style="left:586px;top:448px;width:115px;height:22px;background:#eef6fd;border-right:1px solid #dadada;border-bottom:1px solid #d6d6d6"></div>
<div class="a" style="left:701px;top:448px;width:120px;height:22px;background:#eef6fd;border-right:1px solid #dadada;border-bottom:1px solid #d6d6d6"></div>
<div class="a" style="left:821px;top:448px;width:79px;height:22px;background:#eef6fd;border-right:1px solid #dadada;border-bottom:1px solid #d6d6d6"></div>
<div class="a" style="left:900px;top:448px;width:72px;height:22px;background:#eef6fd;border-right:1px solid #dadada;border-bottom:1px solid #d6d6d6"></div>
<div class="a" style="left:972px;top:448px;width:130px;height:22px;background:#eef6fd;border-right:1px solid #dadada;border-bottom:1px solid #d6d6d6"></div>
<div class="a" style="left:1102px;top:448px;width:182px;height:22px;background:#fefee2;border-right:1px solid #dadada;border-bottom:1px solid #d6d6d6"></div>
<div class="t" style="left:17px;width:40px;text-align:center;top:452px;font-size:11px">5</div>
<div class="t" style="left:60px;top:452px;font-size:10.5px">1003001</div>
<div class="t" style="left:141px;top:452px">得力经典防滑握手设</div>
<div class="t m" style="left:262px;top:452px;font-size:10px">6546</div>
<svg class="a" style="left:8px;top:455px" width="5" height="9"><path d="M0 0L4.5 4.5L0 9Z" fill="#000"/></svg>
<div class="a" style="left:3px;top:709px;width:1281px;height:24px;border-top:1px solid #a9a9a9;border-right:1px solid #b8b8b8;background:linear-gradient(180deg,#f4f4f5,#eeeef0)"></div>
<div class="a" style="left:4px;top:711px;width:14px;height:8px;background:#fbfbfb"></div>
<div class="t" style="left:509px;top:716px;font-size:10.5px">25</div>
<div class="t" style="left:868px;top:716px;font-size:10.5px">0</div>
<div class="t" style="left:921px;top:716px;font-size:10.5px">15990</div>
<div class="a" style="left:1436px;top:349px;width:4px;height:84px;background:linear-gradient(90deg,#a9c8e8,#cfe2f5);box-shadow:-2px 0 3px rgba(0,0,0,.25)"></div><!--/grid--></div>

<!-- DIALOG -->
<div id="dlg">
<div class="a" style="left:407px;top:338px;width:528px;height:358px;border:1px solid #3c4c5c;background:linear-gradient(180deg,#98b6d4 0px,#a9c4e0 15px,#b9d2ec 29px,#b9d2ec 100%);box-shadow:inset 1px 1px 0 #eefaff,inset -1px -1px 0 #3fd2f2"></div>
<div class="t" style="left:422px;top:350px;color:#000">打印</div>
<div class="a" style="left:894px;top:348px;width:31px;height:17px;border:1px solid #6a2424;border-radius:3px;background:linear-gradient(180deg,#e9a597 0%,#dc8c7c 40%,#c4412a 45%,#c8482e 80%,#dc7060 100%)"></div>
<svg class="a" style="left:902px;top:350px" width="15" height="13" viewBox="0 0 15 13"><path d="M3.5 3L11.5 10M11.5 3L3.5 10" stroke="#5a2a2a" stroke-width="3.6" stroke-linecap="round" opacity=".55"/><path d="M3.5 3L11.5 10M11.5 3L3.5 10" stroke="#fff" stroke-width="2.2" stroke-linecap="round"/></svg>
<div class="a" style="left:415px;top:368px;width:512px;height:320px;background:#f0f0f0;border-top:1px solid #a9c0d8"></div>

<!-- group printer -->
<div class="gb" style="left:419px;top:380px;width:504px;height:94px"></div>
<div class="gl" style="left:426px;top:374px">打印机</div>
<div class="t" style="left:427px;top:394px">名称<span class="hw">:</span></div>
<div class="a" style="left:478px;top:389px;width:345px;height:21px;background:#fff;border:2px solid;border-color:#7a7a7a #fff #fff #7a7a7a;box-shadow:inset 1px 1px 0 #a0a0a0"></div>
<div class="a" style="left:481px;top:392px;width:324px;height:16px;background:#3399ff;border:1px dotted #e08a20"></div>
<div class="a" style="left:805px;top:391px;width:16px;height:17px;background:#f0f0f0;border:1px solid;border-color:#fff #7a7a7a #7a7a7a #fff"></div>
<svg class="a" style="left:808px;top:397px" width="9" height="5"><path d="M0 0H9L4.5 5Z" fill="#000"/></svg>
<svg class="a" style="left:483px;top:392px" width="18" height="16" viewBox="0 0 18 16"><path d="M7 2L13 1L15 5L9 6Z" fill="#fff" stroke="#bbb" stroke-width=".6"/><path d="M1 8L10 5L17 8V12L8 15L1 12Z" fill="#d8d8d8" stroke="#707070" stroke-width=".8"/><path d="M1 8L8 11L17 8" fill="none" stroke="#909090" stroke-width=".8"/><rect x="5" y="9" width="2" height="1" fill="#2c2"/><rect x="9" y="9" width="2" height="1" fill="#e22"/></svg>
<div class="t" style="left:504px;top:394px;color:#fff">默认打印机</div>
<div class="a" style="left:830px;top:388px;width:75px;height:22px;border:1px solid #707070;border-radius:3px;background:linear-gradient(180deg,#f2f2f2 0%,#ebebeb 45%,#dddddd 50%,#cfcfcf 100%);box-shadow:inset 0 0 0 1px #fbfbfb"></div>
<div class="t" style="left:855px;top:393px">属性</div>
<div class="t" style="left:427px;top:414px">状态<span class="hw">:</span></div>
<div class="t" style="left:477px;top:413px">空闲</div>
<div class="t" style="left:427px;top:428px">类型<span class="hw">:</span></div>
<div class="t m" style="left:477px;top:430px;font-size:10px">doPDF 7 Printer Driver</div>
<div class="t" style="left:427px;top:442px">位置<span class="hw">:</span></div>
<div class="t m" style="left:477px;top:443px;font-size:10px">DOP7:</div>
<div class="t" style="left:427px;top:457px">备注<span class="hw">:</span></div>
<div class="a" style="left:791px;top:418px;width:13px;height:13px;background:#fff;border:1px solid;border-color:#7a7a7a #f8f8f8 #f8f8f8 #7a7a7a;box-shadow:inset 1px 1px 0 #a8a8a8"></div>
<div class="t" style="left:809px;top:418px">不打印背景图</div>
<div class="a" style="left:791px;top:433px;width:13px;height:13px;background:#fff;border:1px solid;border-color:#7a7a7a #f8f8f8 #f8f8f8 #7a7a7a;box-shadow:inset 1px 1px 0 #a8a8a8"></div>
<svg class="a" style="left:793px;top:435px" width="9" height="9"><path d="M1 4L3.5 7L8 1.5" fill="none" stroke="#000" stroke-width="1.8"/></svg>
<div class="t" style="left:809px;top:433px">彩色打印</div>

<!-- group range -->
<div class="gb" style="left:419px;top:483px;width:265px;height:95px"></div>
<div class="gl" style="left:426px;top:478px">页范围</div>
<svg class="a" style="left:427px;top:494px" width="12" height="12" viewBox="0 0 12 12"><circle cx="6" cy="6" r="5" fill="#fff" stroke="#7a7a7a"/><path d="M10 3A5 5 0 0 1 3 10" fill="none" stroke="#e8e8e8"/><circle cx="6" cy="6" r="2" fill="#000"/></svg>
<div class="t" style="left:445px;top:495px">全部</div>
<svg class="a" style="left:427px;top:512px" width="12" height="12" viewBox="0 0 12 12"><circle cx="6" cy="6" r="5" fill="#f4f4f4" stroke="#b0b0b0"/><path d="M10 3A5 5 0 0 1 3 10" fill="none" stroke="#e8e8e8"/></svg>
<div class="t" style="left:445px;top:513px;color:#a0a0a0;text-shadow:1px 1px 0 #fff">当前页</div>
<svg class="a" style="left:427px;top:529px" width="12" height="12" viewBox="0 0 12 12"><circle cx="6" cy="6" r="5" fill="#fff" stroke="#7a7a7a"/><path d="M10 3A5 5 0 0 1 3 10" fill="none" stroke="#e8e8e8"/></svg>
<div class="t" style="left:445px;top:529px">页<span class="hw">(</span><u>P</u><span class="hw">)</span><span class="hw">:</span></div>
<div class="a" style="left:521px;top:522px;width:158px;height:19px;background:#fff;border:1px solid;border-color:#7a7a7a #f8f8f8 #f8f8f8 #7a7a7a;box-shadow:inset 1px 1px 0 #a0a0a0"></div>
<div class="t" style="left:427px;top:548px">输入页号或页范围<span class="hw">,</span>逗号分隔<span class="hw">.</span>例如<span class="hw">:</span><span class="hw"> </span><span class="m" style="font-size:10px">1,3,5-12</span></div>

<!-- group copies -->
<div class="gb" style="left:689px;top:483px;width:234px;height:95px"></div>
<div class="gl" style="left:695px;top:478px">打印份数</div>
<div class="t" style="left:696px;top:497px">打印份数<span class="hw">:</span></div>
<div class="a" style="left:816px;top:497px;width:63px;height:19px;background:#fff;border:1px solid;border-color:#7a7a7a #f8f8f8 #f8f8f8 #7a7a7a;box-shadow:inset 1px 1px 0 #a0a0a0"></div>
<div class="t" style="left:819px;top:501px;font-size:10.5px">1</div>
<div class="a" style="left:862px;top:499px;width:15px;height:8px;background:#f0f0f0;border:1px solid;border-color:#fff #808080 #808080 #fff"></div>
<div class="a" style="left:862px;top:507px;width:15px;height:8px;background:#f0f0f0;border:1px solid;border-color:#fff #808080 #808080 #fff"></div>
<svg class="a" style="left:867px;top:501px" width="5" height="12"><path d="M0 3H5L2.5 0Z M0 9H5L2.5 12Z" fill="#000"/></svg>
<svg class="a" style="left:698px;top:526px" width="130" height="42" viewBox="0 0 130 42"><g font-family="Liberation Sans" font-size="10"><rect x="9.5" y="2.5" width="20" height="25" fill="#fff" stroke="#000"/><text x="24.5" y="24">1</text><rect x="2.5" y="15.5" width="20" height="25" fill="#fff" stroke="#000"/><text x="15.5" y="37">1</text><rect x="45.5" y="2.5" width="20" height="25" fill="#fff" stroke="#000"/><text x="60.5" y="24">2</text><rect x="38.5" y="15.5" width="20" height="25" fill="#fff" stroke="#000"/><text x="51.5" y="37">2</text><rect x="81.5" y="2.5" width="20" height="25" fill="#fff" stroke="#000"/><text x="96.5" y="24">3</text><rect x="74.5" y="15.5" width="20" height="25" fill="#fff" stroke="#000"/><text x="87.5" y="37">3</text></g></svg>
<div class="a" style="left:816px;top:537px;width:13px;height:13px;background:#fff;border:1px solid;border-color:#7a7a7a #f8f8f8 #f8f8f8 #7a7a7a;box-shadow:inset 1px 1px 0 #a8a8a8"></div>
<div class="t" style="left:834px;top:537px">逐份打印</div>

<!-- group offset -->
<div class="gb" style="left:419px;top:587px;width:265px;height:55px"></div>
<div class="gl" style="left:426px;top:583px">打印偏移</div>
<div class="t" style="left:431px;top:599px">上偏移<span class="hw">(</span>厘米<span class="hw">)</span><span class="hw">:</span></div>
<div class="a" style="left:529px;top:598px;width:147px;height:20px;background:#fff;border:1px solid;border-color:#7a7a7a #f8f8f8 #f8f8f8 #7a7a7a;box-shadow:inset 1px 1px 0 #a0a0a0"></div>
<div class="t" style="left:531px;top:602px;font-size:11px;letter-spacing:0.3px">0.30</div>
<div class="a" style="left:659px;top:600px;width:15px;height:8px;background:#f0f0f0;border:1px solid;border-color:#fff #808080 #808080 #fff"></div>
<div class="a" style="left:659px;top:608px;width:15px;height:8px;background:#f0f0f0;border:1px solid;border-color:#fff #808080 #808080 #fff"></div>
<svg class="a" style="left:664px;top:602px" width="5" height="12"><path d="M0 3H5L2.5 0Z M0 9H5L2.5 12Z" fill="#000"/></svg>
<div class="t" style="left:431px;top:622px">左偏移<span class="hw">(</span>厘米<span class="hw">)</span><span class="hw">:</span></div>
<div class="a" style="left:529px;top:621px;width:147px;height:20px;background:#fff;border:1px solid;border-color:#7a7a7a #f8f8f8 #f8f8f8 #7a7a7a;box-shadow:inset 1px 1px 0 #a0a0a0"></div>
<div class="t" style="left:531px;top:625px;font-size:11px;letter-spacing:0.3px">-0.50</div>
<div class="a" style="left:659px;top:623px;width:15px;height:8px;background:#f0f0f0;border:1px solid;border-color:#fff #808080 #808080 #fff"></div>
<div class="a" style="left:659px;top:631px;width:15px;height:8px;background:#f0f0f0;border:1px solid;border-color:#fff #808080 #808080 #fff"></div>
<svg class="a" style="left:664px;top:625px" width="5" height="12"><path d="M0 3H5L2.5 0Z M0 9H5L2.5 12Z" fill="#000"/></svg>

<!-- group zoom -->
<div class="gb" style="left:689px;top:587px;width:234px;height:55px"></div>
<div class="gl" style="left:695px;top:583px">缩放</div>
<div class="t" style="left:696px;top:599px">缩放比例<span class="hw">:</span></div>
<div class="a" style="left:783px;top:598px;width:134px;height:19px;background:#fff;border:1px solid;border-color:#7a7a7a #f8f8f8 #f8f8f8 #7a7a7a;box-shadow:inset 1px 1px 0 #a0a0a0"></div>
<div class="t" style="left:786px;top:602px;font-size:10.5px">100</div>
<div class="a" style="left:900px;top:600px;width:15px;height:8px;background:#f0f0f0;border:1px solid;border-color:#fff #808080 #808080 #fff"></div>
<div class="a" style="left:900px;top:608px;width:15px;height:8px;background:#f0f0f0;border:1px solid;border-color:#fff #808080 #808080 #fff"></div>
<svg class="a" style="left:905px;top:602px" width="5" height="12"><path d="M0 3H5L2.5 0Z M0 9H5L2.5 12Z" fill="#000"/></svg>
<div class="t" style="left:696px;top:621px">按纸型缩放<span class="hw">:</span></div>
<div class="a" style="left:783px;top:618px;width:134px;height:18px;background:#fff;border:1px solid;border-color:#7a7a7a #f8f8f8 #f8f8f8 #7a7a7a;box-shadow:inset 1px 1px 0 #a0a0a0"></div>
<div class="t" style="left:786px;top:621px">无缩放</div>
<div class="a" style="left:899px;top:620px;width:16px;height:15px;background:#f0f0f0;border:1px solid;border-color:#fff #7a7a7a #7a7a7a #fff"></div>
<svg class="a" style="left:903px;top:625px" width="9" height="5"><path d="M0 0H9L4.5 5Z" fill="#000"/></svg>

<!-- bottom -->
<div class="t" style="left:425px;top:658px">打印<span class="hw">:</span></div>
<div class="a" style="left:466px;top:654px;width:142px;height:19px;background:#fff;border:1px solid;border-color:#7a7a7a #f8f8f8 #f8f8f8 #7a7a7a;box-shadow:inset 1px 1px 0 #a0a0a0"></div>
<div class="t" style="left:469px;top:658px">全部页</div>
<div class="a" style="left:590px;top:656px;width:16px;height:16px;background:#f0f0f0;border:1px solid;border-color:#fff #7a7a7a #7a7a7a #fff"></div>
<svg class="a" style="left:594px;top:661px" width="9" height="5"><path d="M0 0H9L4.5 5Z" fill="#000"/></svg>
<div class="a" style="left:756px;top:653px;width:80px;height:22px;border:1px solid #3c7fb1;border-radius:3px;background:linear-gradient(180deg,#eaf6fd 0%,#d9f0fc 45%,#bee6fd 50%,#a7d9f5 100%);box-shadow:inset 0 0 0 1px #98d8f4"></div>
<div class="t" style="left:784px;top:658px">确认</div>
<div class="a" style="left:844px;top:653px;width:80px;height:22px;border:1px solid #707070;border-radius:3px;background:linear-gradient(180deg,#f2f2f2 0%,#ebebeb 45%,#dddddd 50%,#cfcfcf 100%);box-shadow:inset 0 0 0 1px #fbfbfb"></div>
<div class="t" style="left:872px;top:658px">取消</div>
</div>

<!-- FOOTER -->
<div class="t f13" style="left:8px;top:744px">合计金额</div>
<div class="a" style="left:73px;top:740px;width:100px;height:18px;background:#efefef"></div>
<div class="t" style="left:75px;top:742px;font-size:12px">15990</div>
<div class="ul" style="left:73px;top:757px;width:100px"></div>
<div class="t f13" style="left:183px;top:745px">整单折扣</div>
<div class="t" style="left:249px;top:742px;font-size:12px">100</div>
<div class="ul" style="left:248px;top:758px;width:80px"></div>
<div class="t f13" style="left:335px;top:745px">整单优惠</div>
<div class="t" style="left:400px;top:742px;font-size:12px">0</div>
<div class="ul" style="left:399px;top:758px;width:86px"></div>
<div class="t f13" style="left:489px;top:745px">应收金额</div>
<div class="a" style="left:554px;top:741px;width:86px;height:17px;background:#efefef"></div>
<div class="t" style="left:556px;top:742px;font-size:12px">15990</div>
<div class="ul" style="left:554px;top:758px;width:86px"></div>
<div class="t f13" style="left:652px;top:745px">制单人</div>
<div class="a" style="left:702px;top:741px;width:84px;height:17px;background:#efefef"></div>
<div class="t f13" style="left:704px;top:741px;color:#8c8c8c">系统管理员</div>
<div class="ul" style="left:702px;top:758px;width:84px"></div>
<div class="t f13" style="left:796px;top:745px">制单日期</div>
<div class="a" style="left:862px;top:741px;width:103px;height:17px;background:#efefef"></div>
<div class="t m" style="left:863px;top:742px;font-size:11px;color:#8c8c8c">2016-05-11</div>
<div class="ul" style="left:862px;top:758px;width:103px"></div>

<div class="t f13" style="left:10px;top:778px">物流快递</div>
<div class="ul" style="left:73px;top:791px;width:130px"></div>
<div class="t f13" style="left:208px;top:778px">物流单号</div>
<div class="ul" style="left:273px;top:791px;width:155px"></div>
<div class="t f13" style="left:433px;top:778px">物流运费</div>
<div class="ul" style="left:497px;top:791px;width:83px"></div>
<div class="t f13" style="left:718px;top:778px">物流代收金额</div>
<div class="ul" style="left:814px;top:791px;width:90px"></div>

<!-- STATUS BAR -->
<div class="a" style="left:0;top:812px;width:1440px;height:28px;background:linear-gradient(180deg,#e4e4e4 0px,#eeeeee 6px,#f0f0f0 100%)"></div>
<div class="a" style="left:0;top:839px;width:1440px;height:1px;background:linear-gradient(90deg,#c8c8c8 0,#c8c8c8 60px,#3a3f47 60px,#3a3f47 100%)"></div>
<svg class="a" style="left:4px;top:819px" width="16" height="16" viewBox="0 0 16 16"><rect x="0" y="0" width="16" height="16" rx="2.5" fill="#d81c1c"/><path d="M3 5C2.5 8 3.5 12 7 13C10 13.5 13 11.5 13.5 9C12 10.5 10 11 8.5 10.5C10 9.5 11.5 8.5 12.5 7.5C10 7.5 8 8.5 6.5 10C5.5 8.5 5 6.5 5.5 4.5Z" fill="#fff"/><path d="M6.5 10C7.5 6.5 10 4 13 3C12 5.5 10 8 7.5 9.5Z" fill="#fff"/></svg>
<div class="t" style="left:23px;top:821px">应用中心：<span class="m" style="font-size:10px">127.0.0.1:7099</span></div>
<div class="sep" style="left:214px;top:816px;height:22px"></div>
<svg class="a" style="left:222px;top:819px" width="16" height="16" viewBox="0 0 16 16"><circle cx="8" cy="8" r="7.3" fill="#3cb43c" stroke="#2a8a2a"/><path d="M4 8.2L7 11L12 5" fill="none" stroke="#fff" stroke-width="2.4"/></svg>
<div class="t" style="left:241px;top:821px">连接状态：正常</div>
<div class="sep" style="left:342px;top:816px;height:22px"></div>
<div class="t" style="left:357px;top:821px">账套：演示账套(2016年第1期)</div>
<div class="sep" style="left:545px;top:816px;height:22px"></div>
<div class="t" style="left:560px;top:821px">操作员：系统管理员<span class="m" style="font-size:10px">(admin)</span> 总公司</div>
<div class="sep" style="left:798px;top:816px;height:22px"></div>
<div class="t" style="left:813px;top:821px">正式版 授权序列号：<span class="m" style="font-size:10px">pc0002</span></div>
<div class="sep" style="left:1146px;top:816px;height:22px"></div>
<svg class="a" style="left:1156px;top:820px" width="17" height="13" viewBox="0 0 17 13"><rect x=".5" y=".5" width="16" height="12" fill="#eaf4fe" stroke="#6ea8dc"/><path d="M.5 .5L8.5 7.5L16.5 .5M.5 12.5L6 6.5M16.5 12.5L11 6.5" fill="none" stroke="#6ea8dc"/></svg>
<div class="t" style="left:1178px;top:821px;text-decoration:underline">消息提醒中心</div>
<svg class="a" style="left:1317px;top:819px" width="15" height="15" viewBox="0 0 15 15"><defs><radialGradient id="rb" cx=".4" cy=".35" r=".7"><stop offset="0" stop-color="#ffb080"/><stop offset=".5" stop-color="#f05020"/><stop offset="1" stop-color="#c02000"/></radialGradient></defs><circle cx="7.5" cy="7.5" r="7" fill="url(#rb)"/></svg>
<div class="t" style="left:1336px;top:821px">未检测到来电设备</div>
<div class="sep" style="left:1437px;top:816px;height:22px"></div>

</body></html>
